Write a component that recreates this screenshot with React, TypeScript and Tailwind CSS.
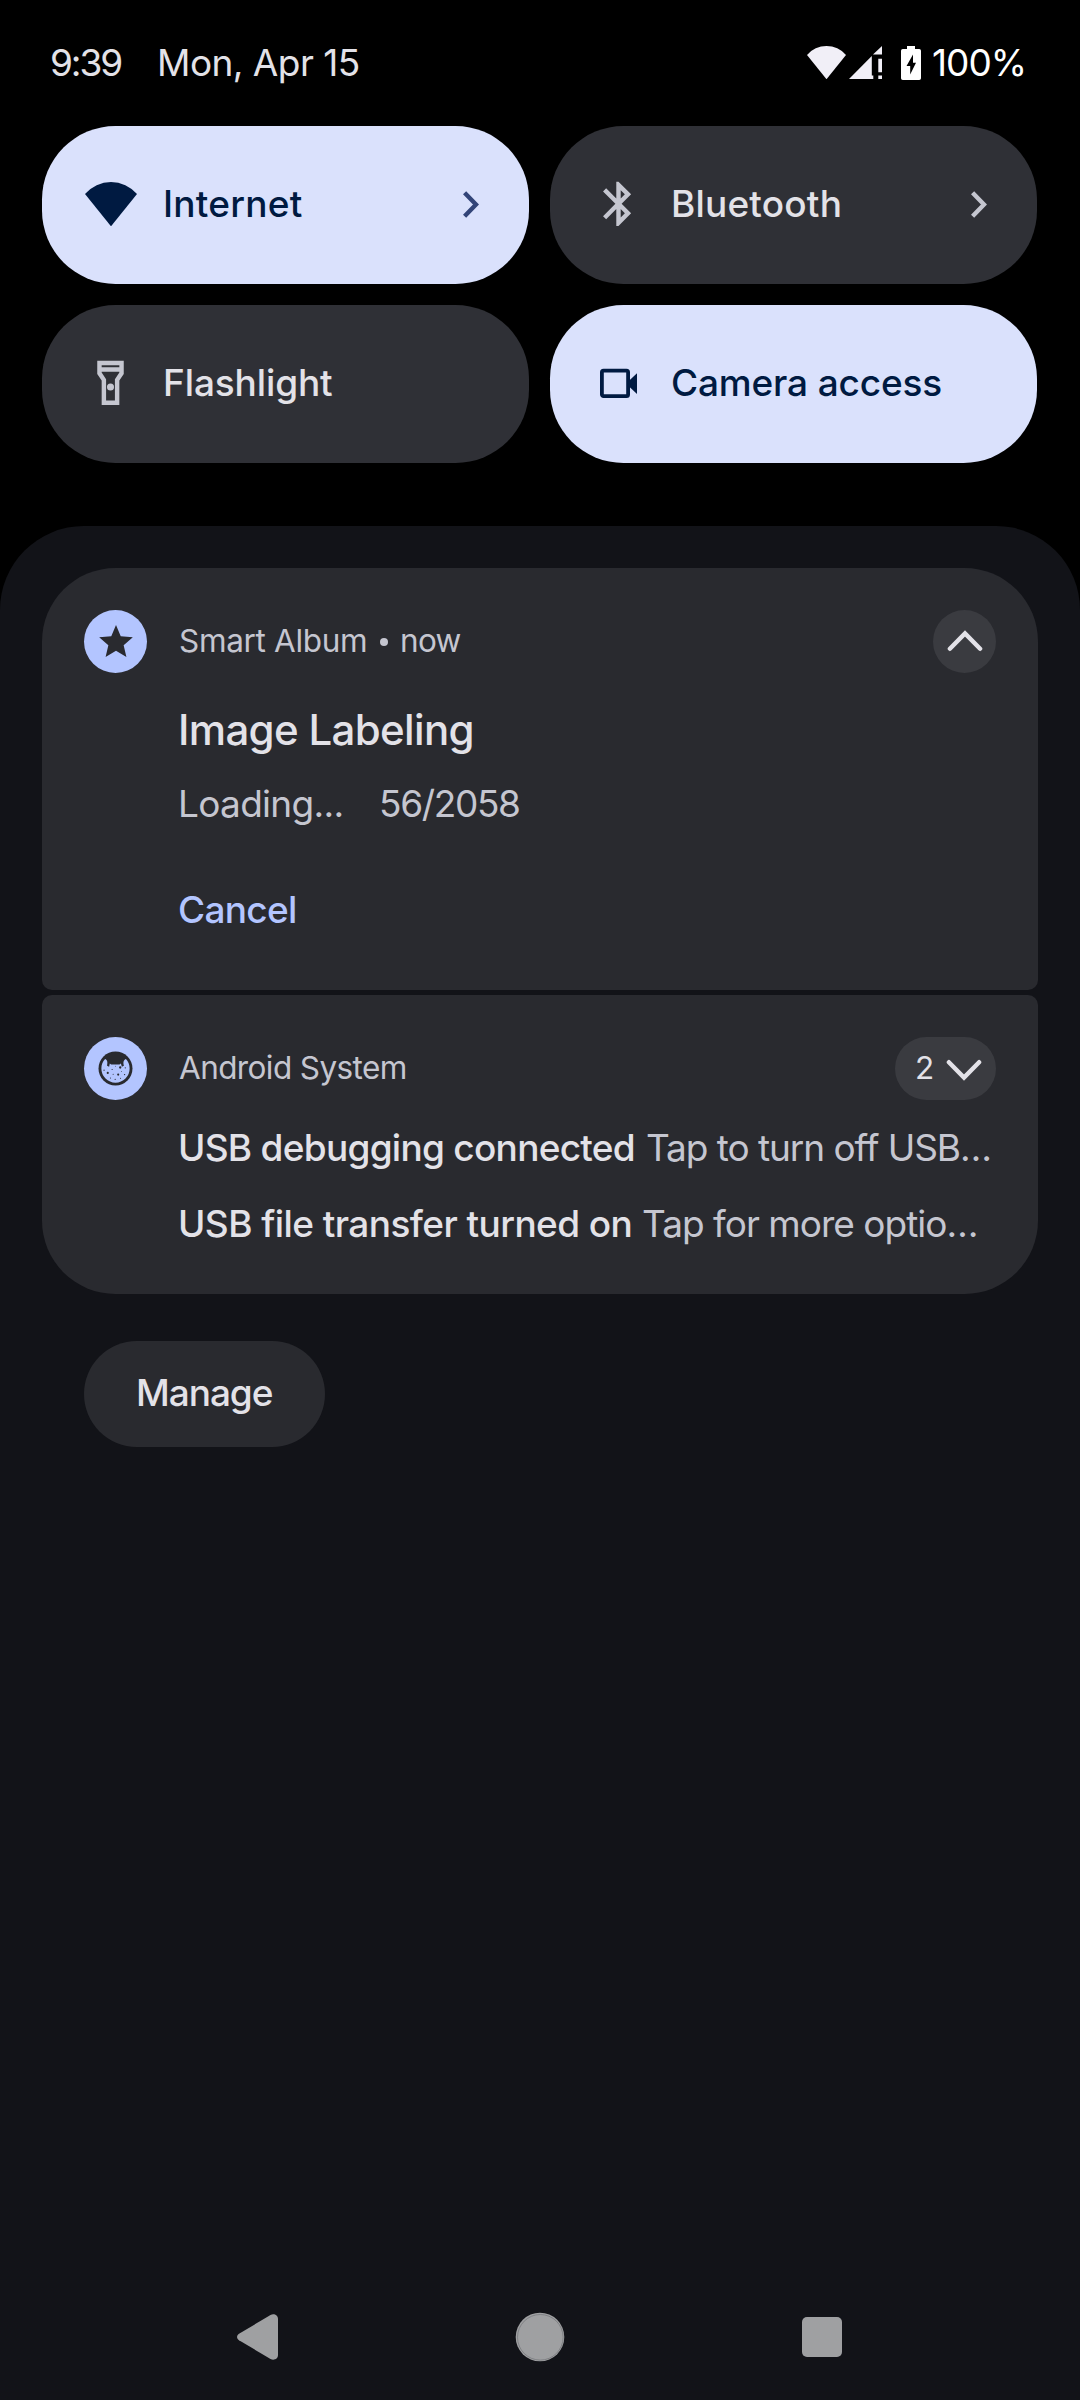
import type { ReactNode } from "react";

function WifiWedge({ className }: { className: string }) {
  return (
    <svg viewBox="0 0 52 44" className={className} fill="currentColor" preserveAspectRatio="none">
      <path d="M0 12A34.2 34.2 0 0 1 52 12L26 44.3Z" />
    </svg>
  );
}

function SignalIcon() {
  return (
    <svg viewBox="0 0 33 33" className="h-[33px] w-[33px]" fill="currentColor">
      <path d="M0 33L22.8 10V29.5H24.3V33Z" />
      <path d="M24 8.4L33 0V8.4Z" />
      <path d="M29.3 12.7H33V26.3H29.3ZM29.3 29.5H33V33H29.3Z" />
    </svg>
  );
}

function BatteryIcon() {
  return (
    <svg viewBox="0 0 20 34" className="h-[34px] w-5" fill="currentColor">
      <path
        fillRule="evenodd"
        d="M6 0H14V3H18.2A1.8 1.8 0 0 1 20 4.8V32.2A1.8 1.8 0 0 1 18.2 34H1.8A1.8 1.8 0 0 1 0 32.2V4.8A1.8 1.8 0 0 1 1.8 3H6ZM12 8.5L5.5 20H9.2V28.5L15 16.8H12Z"
      />
    </svg>
  );
}

function BluetoothIcon() {
  return (
    <svg viewBox="0 0 24 24" className="size-[53.6px]" fill="currentColor">
      <path d="M17.71 7.71L12 2h-1v7.59L6.41 5 5 6.41 10.59 12 5 17.59 6.41 19 11 14.41V22h1l5.71-5.71-4.3-4.29 4.3-4.29zM13 5.83l1.88 1.88L13 9.59V5.83zm1.88 10.46L13 18.17v-3.76l1.88 1.88z" />
    </svg>
  );
}

function FlashlightIcon() {
  return (
    <svg viewBox="0 0 24 24" className="size-[53.6px]" fill="currentColor">
      <path d="M18 2H6v6l2 3v11h8V11l2-3V2zm-2 2v1H8V4h8zm-2 6.4V20h-4v-9.61l-2-3V7h8v.39l-2 3.01z" />
      <circle cx="12" cy="13.9" r="1.6" />
    </svg>
  );
}

function CameraIcon() {
  return (
    <svg viewBox="0 0 53 53" className="size-[53px]" fill="currentColor">
      <rect x="9.9" y="13.6" width="26.2" height="25.6" rx="1.6" fill="none" stroke="currentColor" strokeWidth="3.8" />
      <path d="M36.5 24.2L45 16.2V37L36.5 29Z" />
    </svg>
  );
}

function TileChevron() {
  return (
    <svg viewBox="0 0 16 27" className="h-[27px] w-4" fill="none" stroke="currentColor" strokeWidth="4.4">
      <path d="M1.6 1.7L13 13.5L1.6 25.3" />
    </svg>
  );
}

function ExpandChevron({ down = false }: { down?: boolean }) {
  return (
    <svg
      viewBox="0 0 36 24"
      className={down ? "h-6 w-9 rotate-180" : "h-6 w-9"}
      fill="none"
      stroke="currentColor"
      strokeWidth="4.4"
      strokeLinecap="round"
    >
      <path d="M2.9 20.8L18 5.4L33.1 20.8" strokeLinejoin="miter" />
    </svg>
  );
}

function StarIcon() {
  return (
    <svg viewBox="2 2 20 19" className="mb-[2px] h-8 w-[34px]" fill="#292a2f">
      <path d="M12 17.27L18.18 21l-1.64-7.03L22 9.24l-7.19-.61L12 2 9.19 8.63 2 9.24l5.46 4.73L5.82 21z" />
    </svg>
  );
}

function AndroidBadge() {
  return (
    <svg viewBox="55 57 104 104" className="size-[35px]">
      <circle cx="107" cy="109" r="50.5" fill="#292a2f" />
      <path
        d="M76 81C85 85 83 94 82 101L88 104L90 94L94 97H119L123 94L126 104L132 101C130 94 129 85 138 81C145 88 149 98 149 109A42 42 0 0 1 65 109C65 98 69 88 76 81Z"
        fill="#b3c5ff"
      />
      <g fill="#292a2f">
        <circle cx="121" cy="106" r="3.4" />
        <circle cx="84" cy="122" r="3.2" />
        <circle cx="115" cy="127" r="3.2" />
        <circle cx="97" cy="112" r="1.8" />
        <circle cx="107" cy="102" r="1.4" />
        <circle cx="136" cy="107" r="1.8" />
        <circle cx="73" cy="114" r="1.8" />
        <circle cx="100" cy="126" r="1.6" />
        <circle cx="134" cy="127" r="2" />
        <circle cx="92" cy="137" r="1.6" />
        <circle cx="106" cy="141" r="1.8" />
        <circle cx="122" cy="138" r="1.6" />
        <circle cx="125" cy="118" r="1.4" />
      </g>
    </svg>
  );
}

function Tile({
  active = false,
  icon,
  chevron = false,
  children,
}: {
  active?: boolean;
  icon: ReactNode;
  chevron?: boolean;
  children: ReactNode;
}) {
  return (
    <div
      className={
        active
          ? "flex h-[158px] items-center rounded-[73.5px] bg-[#dae1fc] pr-[50px] pb-[2px] pl-[42px] text-[#001a41]"
          : "flex h-[158px] items-center rounded-[73.5px] bg-[#2f3036] pr-[50px] pb-[2px] pl-[42px] text-[#e3e2e8]"
      }
    >
      <span
        className={
          active
            ? "flex w-[53px] shrink-0 items-center justify-center"
            : "flex w-[53px] shrink-0 items-center justify-center text-[#c5c6d0]"
        }
      >
        {icon}
      </span>
      <span className="ml-[26px] grow text-[37px] leading-[48px] font-medium whitespace-nowrap">{children}</span>
      {chevron && (
        <span className={active ? "text-[#324478]" : "text-[#c5c6d0]"}>
          <TileChevron />
        </span>
      )}
    </div>
  );
}

function AppBadge({ children }: { children: ReactNode }) {
  return (
    <span className="flex size-[63px] shrink-0 items-center justify-center rounded-full bg-[#b3c5ff]">{children}</span>
  );
}

export default function App() {
  return (
    <div className="flex h-[2400px] w-[1080px] flex-col overflow-hidden bg-black font-['Inter','Roboto',sans-serif] text-[#e3e2e8]">
      <header className="flex h-[126px] shrink-0 items-center pr-[52px] pb-[2px] pl-[50px] text-[37px] leading-[48px] whitespace-nowrap">
        <span className="w-[107px] pt-[2px] tracking-[-2.1px]">9:39</span>
        <span className="grow pt-[2px] tracking-[-0.54px]">Mon, Apr 15</span>
        <div className="flex items-center text-[#f1eff7]">
          <WifiWedge className="h-[33px] w-[39px]" />
          <span className="ml-[3px]">
            <SignalIcon />
          </span>
          <span className="ml-[19px] pt-px text-white">
            <BatteryIcon />
          </span>
          <span className="ml-[11px] w-[96px] pt-[2px] tracking-[-1px] text-white">100%</span>
        </div>
      </header>

      <section className="grid shrink-0 grid-cols-[487px_487px] gap-[21px] px-[42px]">
        <Tile active chevron icon={<WifiWedge className="h-[44px] w-[52px]" />}>
          <span className="tracking-[0.25px]">Internet</span>
        </Tile>
        <Tile chevron icon={<BluetoothIcon />}>
          <span className="tracking-[0.19px]">Bluetooth</span>
        </Tile>
        <Tile icon={<FlashlightIcon />}>
          <span className="tracking-[-0.12px]">Flashlight</span>
        </Tile>
        <Tile active icon={<CameraIcon />}>
          <span className="tracking-[-0.16px]">Camera access</span>
        </Tile>
      </section>

      <main className="mt-[63px] flex grow flex-col rounded-t-[84px] bg-[#121318] px-[42px] pt-[42px]">
        <article className="h-[422px] shrink-0 rounded-t-[73.5px] rounded-b-[10px] bg-[#292a2f] px-[42px] pt-[42px] whitespace-nowrap">
          <div className="flex h-[63px] items-center">
            <AppBadge>
              <StarIcon />
            </AppBadge>
            <div className="mb-px ml-[32px] flex grow items-center text-[31.5px] leading-10 text-[#c5c6d0]">
              <span className="w-[201px] tracking-[-0.33px]">Smart Album</span>
              <span className="mt-px size-2 rounded-full bg-[#c5c6d0]" />
              <span className="ml-[12px] tracking-[-0.66px]">now</span>
            </div>
            <span className="flex size-[63px] items-center justify-center rounded-full bg-[#3a3b40] pb-[4px]">
              <ExpandChevron />
            </span>
          </div>
          <div className="flex flex-col pl-[94px]">
            <h2 className="mt-[29px] text-[42px] leading-[56px] font-medium tracking-[-0.66px]">Image Labeling</h2>
            <p className="mt-[22px] flex text-[37px] leading-[48px] text-[#c5c6d0]">
              <span className="w-[201px] tracking-[-0.7px]">Loading...</span>
              <span className="tracking-[-1.35px]">56/2058</span>
            </p>
            <button className="mt-[58px] self-start text-[37px] leading-[48px] font-medium tracking-[-0.7px] text-[#b3c5ff]">
              Cancel
            </button>
          </div>
        </article>

        <article className="mt-[5px] h-[299px] shrink-0 rounded-t-[10px] rounded-b-[73.5px] bg-[#292a2f] px-[42px] pt-[42px] whitespace-nowrap">
          <div className="flex h-[63px] items-center">
            <AppBadge>
              <AndroidBadge />
            </AppBadge>
            <span className="mb-[2px] ml-[32px] grow text-[31.5px] leading-10 tracking-[-0.6px] text-[#c5c6d0]">
              Android System
            </span>
            <span className="flex h-[63px] w-[101px] items-center rounded-full bg-[#3a3b40] pl-[20px]">
              <span className="mb-[2px] w-[31px] text-[31.5px] leading-10">2</span>
              <span className="pt-[5px]">
                <ExpandChevron down />
              </span>
            </span>
          </div>
          <div className="flex flex-col pl-[94px] text-[37px] leading-[48px]">
            <p className="mt-[24px] flex">
              <span className="w-[468px] shrink-0 font-medium tracking-[-0.72px]">USB debugging connected</span>
              <span className="tracking-[-1.06px] text-[#c5c6d0]">Tap to turn off USB…</span>
            </p>
            <p className="mt-[28px] flex">
              <span className="w-[464px] shrink-0 font-medium tracking-[-0.57px]">USB file transfer turned on</span>
              <span className="tracking-[-0.98px] text-[#c5c6d0]">Tap for more optio…</span>
            </p>
          </div>
        </article>

        <button className="mt-[47px] ml-[42px] flex h-[106px] w-[241px] shrink-0 items-center rounded-full bg-[#292a2f] pb-[2px] pl-[52px] text-[37px] leading-[48px] font-medium tracking-[-1.05px]">
          Manage
        </button>

        <nav className="mt-auto mb-[38px] flex h-[50px] shrink-0 items-center justify-between pr-[196px] pl-[195px] text-[#9fa0a2]">
          <svg viewBox="0 0 41 46" className="h-[46px] w-[41px]" fill="currentColor">
            <path d="M2 19.8L33.5 1C37 -0.8 41 1.2 41 5V41C41 44.8 37 46.8 33.5 45L2 26.2C-0.6 24.4 -0.6 21.6 2 19.8Z" />
          </svg>
          <svg viewBox="0 0 50 50" className="size-[50px]" fill="none">
            <circle cx="25" cy="25" r="24.3" fill="currentColor" />
            <circle cx="25.3" cy="25.3" r="22.8" stroke="#77787c" strokeWidth="0.8" />
          </svg>
          <span className="size-10 rounded-[5px] bg-[#9fa0a2]" />
        </nav>
      </main>
    </div>
  );
}
